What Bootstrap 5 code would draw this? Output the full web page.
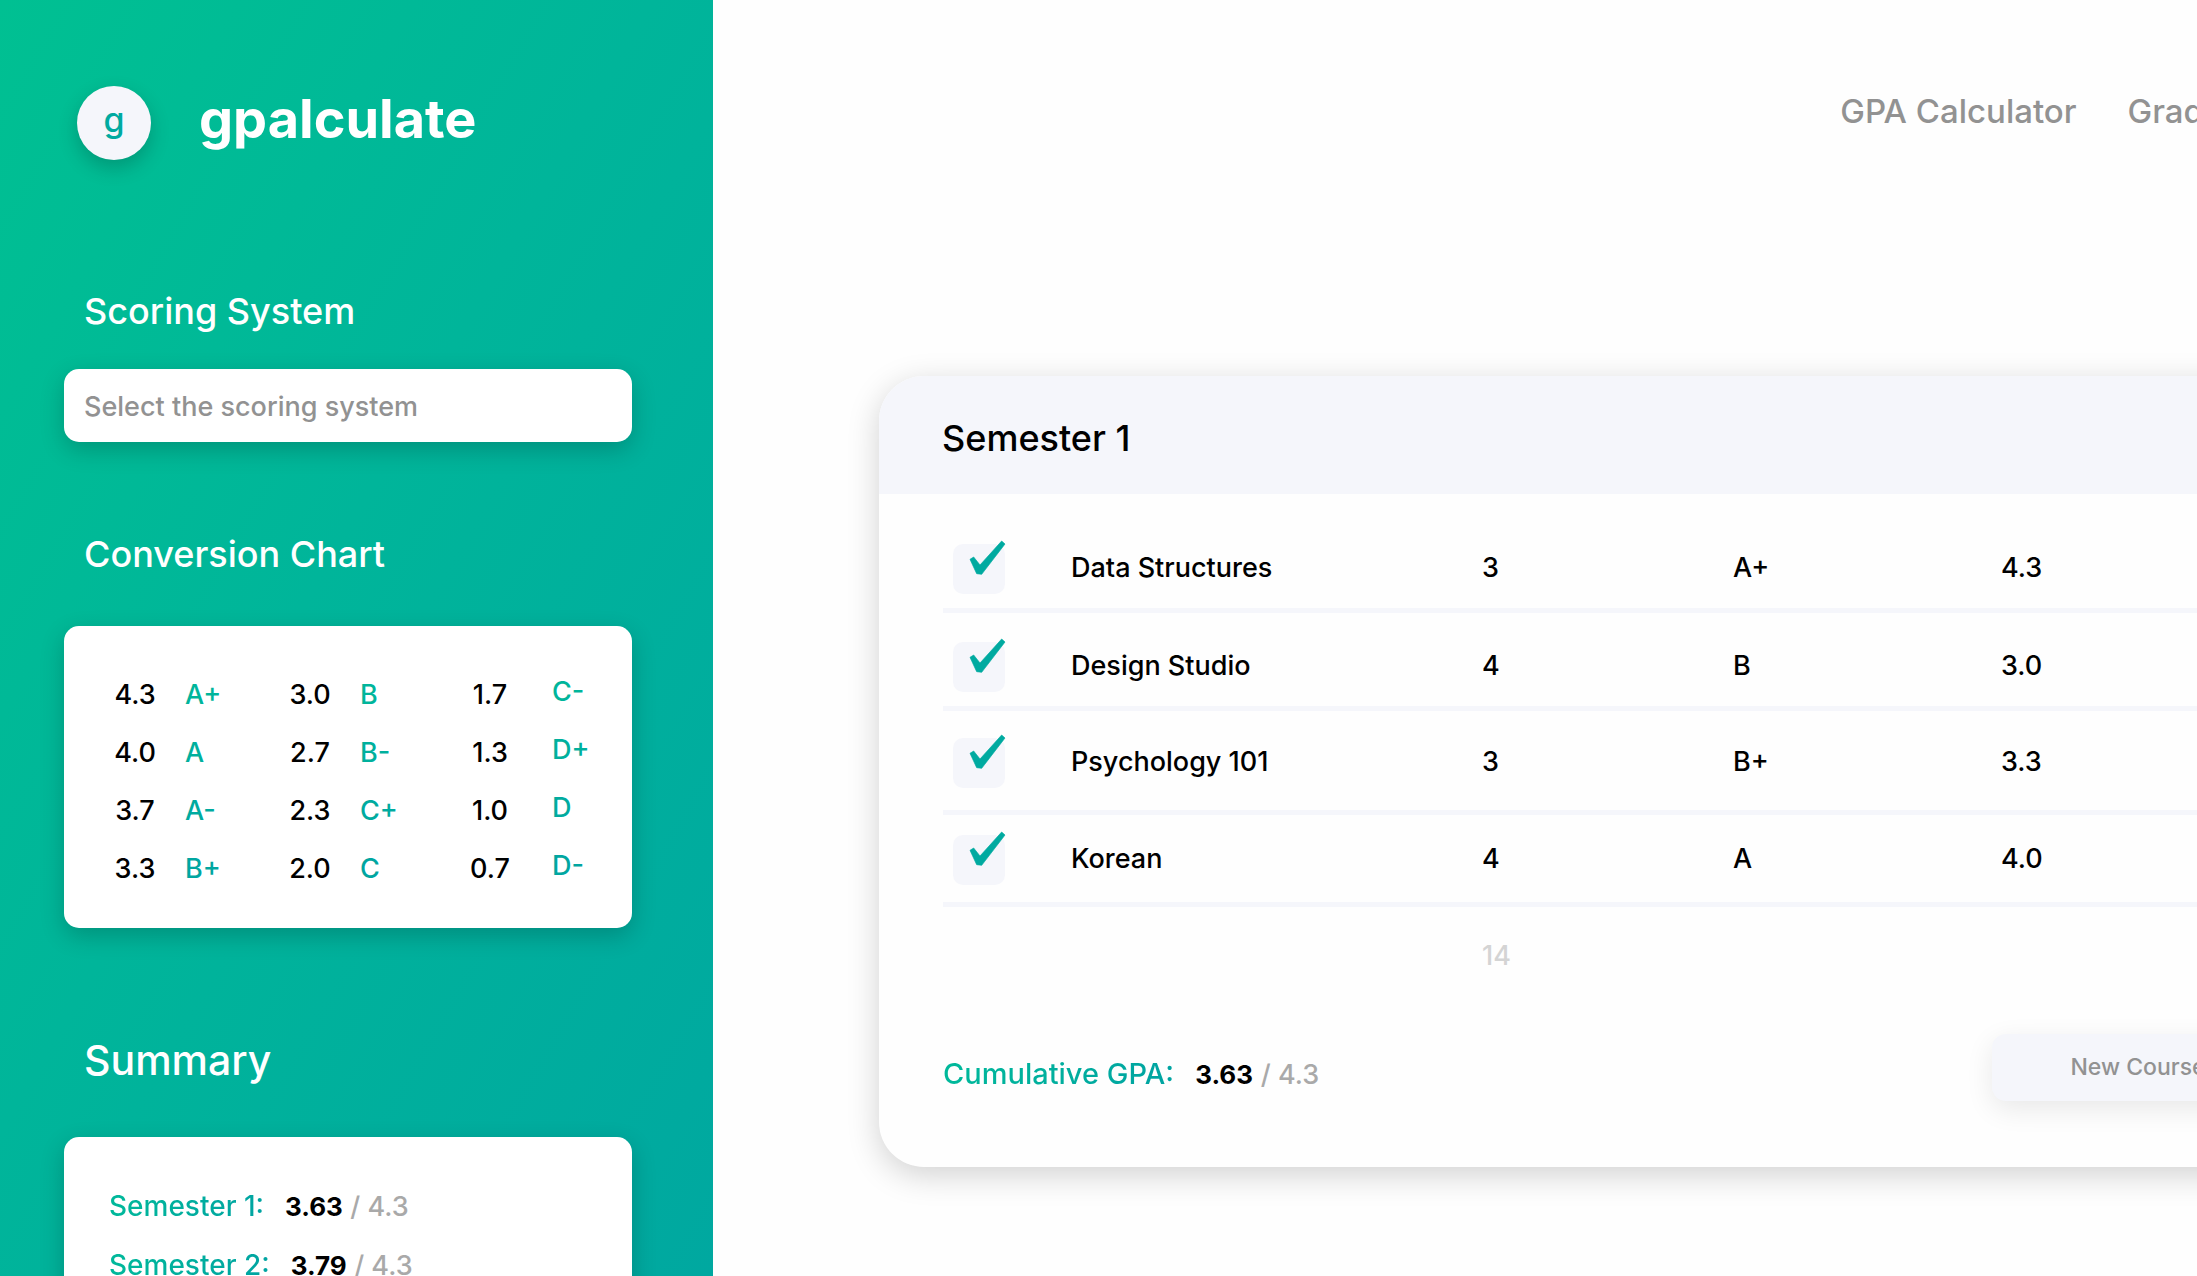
<!DOCTYPE html>
<html lang="en">
<head>
<meta charset="utf-8">
<meta name="viewport" content="width=device-width, initial-scale=1">
<title>gpalculate</title>
<link href="https://cdn.jsdelivr.net/npm/bootstrap@5.3.0/dist/css/bootstrap.min.css" rel="stylesheet">
<style>
  :root { --teal: #00aaa0; --mist: #f5f6fb; --muted: #929292; }
  body { font-family: Inter, "Liberation Sans", sans-serif; font-weight: 500; background: #fefefe; color: #000; }
  h1, h2, h3 { font-weight: 500; margin: 0; }

  /* Sidebar */
  .sidebar { flex: 0 0 713px; padding: 86px 81px 0 64px; background: linear-gradient(120deg, #00c092 0%, #00b59a 45%, #00a8a0 100%); }
  .brand { gap: 48px; padding-left: 13px; }
  .brand-dot { width: 74px; height: 74px; padding-bottom: 6px; font-size: 34px; line-height: 40px; color: var(--teal); background: var(--mist); box-shadow: 0 8px 20px rgba(0, 0, 0, .2); }
  .brand-name { font-size: 54px; line-height: 60px; font-weight: 700; }
  .side-title { font-size: 36px; line-height: 48px; padding-left: 20px; color: #fff; }
  .side-title-lg { font-size: 41px; }
  .scoring-title { margin: 127px 0 34px; }
  .chart-title { margin: 88px 0 48px; }
  .summary-title { margin: 108px 0 53px; }
  .panel { border: 0; border-radius: 15px; background-color: #fff; box-shadow: 0 8px 24px rgba(0, 0, 0, .2); }
  .scoring-select { height: 73px; padding: 3px 20px 0; font-size: 27px; font-weight: 500; color: var(--muted); background-image: none; }

  .chart-panel { padding: 40px 0 30px 43px; }
  .chart-table { width: 100%; table-layout: fixed; font-size: 27px; line-height: 58px; }
  .chart-table th, .chart-table td { padding: 0; font-weight: 500; }
  .chart-table th { text-align: center; }
  .chart-table td { padding-left: 22px; }
  .chart-table td:last-child { padding: 0 0 6px 34px; line-height: 52px; }
  .tone-1 td { color: #00b59b; }
  .tone-2 td { color: #00b09d; }
  .tone-3 td { color: #00ab9f; }
  .tone-4 td { color: #00a6a1; }

  .summary-panel { padding: 40px 45px; }
  .gpa-line { gap: 21px; font-size: 28px; line-height: 58px; }
  .gpa-label { color: transparent; background: linear-gradient(100deg, #00b99a, #00a3a2); background-clip: text; -webkit-background-clip: text; }
  .gpa-value { font-size: 26px; font-weight: 700; }
  .gpa-scale { font-size: 27px; color: #a9a9a9; }

  /* Main area: wider than the window, the rest runs out on the right */
  .workspace { flex: 0 0 calc(100% - 473px); padding: 87px 40px 0 166px; }
  .top-nav { gap: 51px; font-size: 33px; line-height: 48px; margin-bottom: 241px; padding-right: 4px; }
  .top-nav a { color: var(--muted); text-decoration: none; }
  .semester { margin-right: 37px; border: 0; border-radius: 45px; background: #fefefe; box-shadow: 0 8px 32px rgba(0, 0, 0, .18); }
  .semester .semester-head { height: 118px; padding: 8px 63px 0; border: 0; border-radius: 45px 45px 0 0; background: var(--mist); }
  .semester-head h2 { font-size: 36px; }
  .semester-body { padding: 0 64px 66px; }
  .courses { width: 100%; table-layout: fixed; font-size: 27px; line-height: 48px; }
  .courses td { vertical-align: top; border-bottom: 5px solid var(--mist); padding: 0; }
  .course-a td { height: 116px; padding-top: 50px; }
  .course-b td { height: 98px; padding-top: 29px; }
  .course-c td { height: 104px; padding-top: 27px; }
  .course-d td { height: 92px; padding-top: 20px; }
  .totals td { border: 0; padding-top: 25px; color: #d4d4d4; }
  .tick { position: relative; display: block; width: 52px; height: 50px; margin-left: 10px; }
  .tick input { appearance: none; display: block; width: 52px; height: 50px; margin: 0; border-radius: 10px; background: var(--mist); }
  .tick svg { position: absolute; top: -4px; left: 16px; pointer-events: none; display: none; }
  .tick input:checked + svg { display: block; }
  .semester-foot { margin-top: 54px; }
  .semester-foot .gpa-line { font-size: 29px; line-height: 48px; margin-top: 16px; }
  .new-course { width: 292px; height: 67px; margin-right: 12px; border: 0; border-radius: 14px; font-size: 23px; font-weight: 500; color: var(--muted); background: var(--mist); box-shadow: 0 8px 28px rgba(0, 0, 0, .09); }
</style>
<script src="https://cdn.jsdelivr.net/npm/bootstrap@5.3.0/dist/js/bootstrap.bundle.min.js"></script>
</head>
<body>
<div class="d-flex vh-100 overflow-hidden">

  <aside class="sidebar overflow-hidden">
    <div class="brand d-flex align-items-center">
      <span class="brand-dot rounded-circle d-flex align-items-center justify-content-center">g</span>
      <h1 class="brand-name text-white mb-2">gpalculate</h1>
    </div>

    <h2 class="side-title scoring-title"><label for="scoring">Scoring System</label></h2>
    <select id="scoring" class="form-select panel scoring-select">
      <option>Select the scoring system</option>
    </select>

    <h2 class="side-title chart-title">Conversion Chart</h2>
    <div class="panel chart-panel">
      <table class="chart-table">
        <colgroup><col style="width:56px"><col style="width:119px"><col style="width:56px"><col style="width:124px"><col style="width:56px"><col></colgroup>
        <tbody>
          <tr class="tone-1"><th>4.3</th><td>A+</td><th>3.0</th><td>B</td><th>1.7</th><td>C-</td></tr>
          <tr class="tone-2"><th>4.0</th><td>A</td><th>2.7</th><td>B-</td><th>1.3</th><td>D+</td></tr>
          <tr class="tone-3"><th>3.7</th><td>A-</td><th>2.3</th><td>C+</td><th>1.0</th><td>D</td></tr>
          <tr class="tone-4"><th>3.3</th><td>B+</td><th>2.0</th><td>C</td><th>0.7</th><td>D-</td></tr>
        </tbody>
      </table>
    </div>

    <h2 class="side-title side-title-lg summary-title">Summary</h2>
    <div class="panel summary-panel">
      <div class="gpa-line d-flex"><span class="gpa-label">Semester 1:</span><span><span class="gpa-value">3.63</span> <span class="gpa-scale">/ 4.3</span></span></div>
      <div class="gpa-line d-flex"><span class="gpa-label">Semester 2:</span><span><span class="gpa-value">3.79</span> <span class="gpa-scale">/ 4.3</span></span></div>
    </div>
  </aside>

  <main class="workspace">
    <nav class="top-nav d-flex justify-content-end text-nowrap">
      <a href="#gpa">GPA Calculator</a>
      <a href="#grade">Grade Calculator</a>
    </nav>

    <section class="card semester">
      <div class="card-header semester-head d-flex align-items-center"><h2>Semester 1</h2></div>
      <div class="semester-body">
        <table class="courses">
          <colgroup><col style="width:128px"><col style="width:411px"><col style="width:251px"><col style="width:268px"><col></colgroup>
          <tbody>
            <tr class="course-a"><td><label class="tick"><input type="checkbox" checked aria-label="Data Structures"><svg width="37" height="36" viewBox="0 0 111 108"><path d="M3 58L14 51L33 75L98 3L108 12L38 103L23 101Z" fill="#00aaa0" stroke="#00aaa0" stroke-width="2" stroke-linejoin="round"/></svg></label></td><td>Data Structures</td><td>3</td><td>A+</td><td>4.3</td></tr>
            <tr class="course-b"><td><label class="tick"><input type="checkbox" checked aria-label="Design Studio"><svg width="37" height="36" viewBox="0 0 111 108"><path d="M3 58L14 51L33 75L98 3L108 12L38 103L23 101Z" fill="#00aaa0" stroke="#00aaa0" stroke-width="2" stroke-linejoin="round"/></svg></label></td><td>Design Studio</td><td>4</td><td>B</td><td>3.0</td></tr>
            <tr class="course-c"><td><label class="tick"><input type="checkbox" checked aria-label="Psychology 101"><svg width="37" height="36" viewBox="0 0 111 108"><path d="M3 58L14 51L33 75L98 3L108 12L38 103L23 101Z" fill="#00aaa0" stroke="#00aaa0" stroke-width="2" stroke-linejoin="round"/></svg></label></td><td>Psychology 101</td><td>3</td><td>B+</td><td>3.3</td></tr>
            <tr class="course-d"><td><label class="tick"><input type="checkbox" checked aria-label="Korean"><svg width="37" height="36" viewBox="0 0 111 108"><path d="M3 58L14 51L33 75L98 3L108 12L38 103L23 101Z" fill="#00aaa0" stroke="#00aaa0" stroke-width="2" stroke-linejoin="round"/></svg></label></td><td>Korean</td><td>4</td><td>A</td><td>4.0</td></tr>
            <tr class="totals"><td></td><td></td><td>14</td><td></td><td></td></tr>
          </tbody>
        </table>
        <div class="semester-foot d-flex justify-content-between align-items-start">
          <div class="gpa-line d-flex"><span class="gpa-label">Cumulative GPA:</span><span><span class="gpa-value">3.63</span> <span class="gpa-scale">/ 4.3</span></span></div>
          <button type="button" class="btn new-course">New Course</button>
        </div>
      </div>
    </section>
  </main>
</div>
</body>
</html>
